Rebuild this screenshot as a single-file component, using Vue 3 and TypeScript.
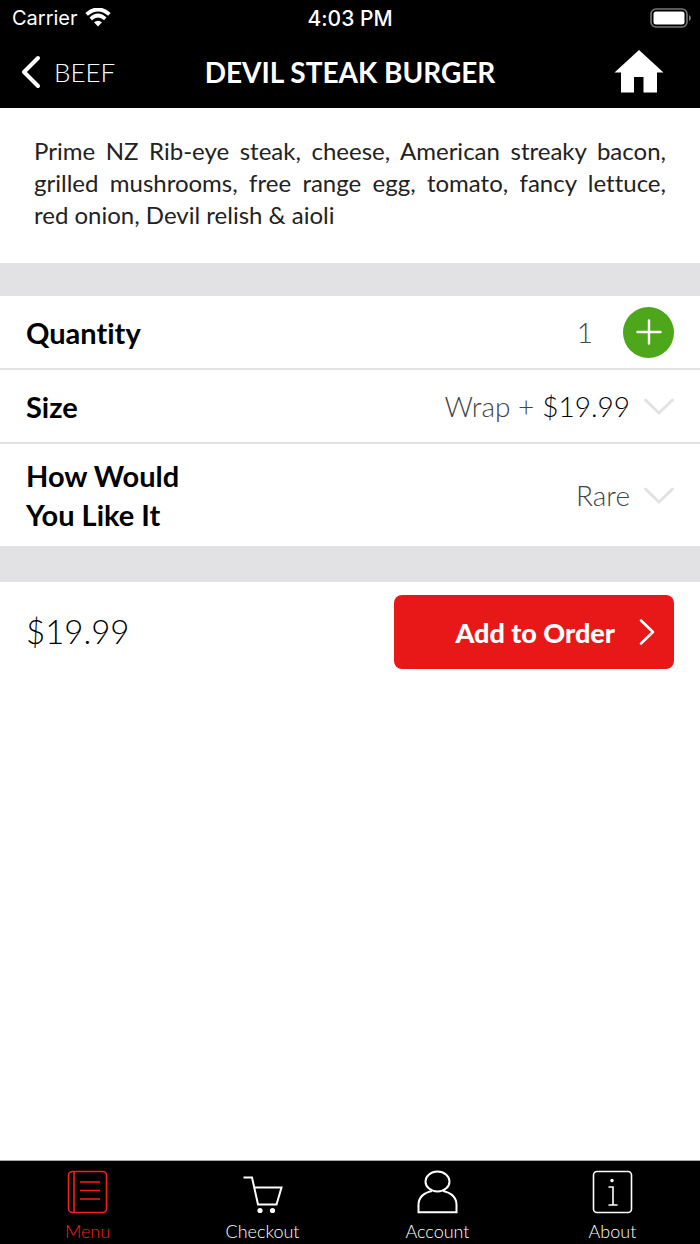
<script setup lang="ts">
import { computed, ref } from 'vue'

interface SizeOption {
  name: string
  price: number
}

const sizes: SizeOption[] = [{ name: 'Wrap', price: 19.99 }]
const donenesses: string[] = ['Rare']
const tabs: string[] = ['Menu', 'Checkout', 'Account', 'About']

const quantity = ref<number>(1)
const sizeName = ref<string>('Wrap')
const doneness = ref<string>('Rare')
const activeTab = ref<string>('Menu')

const unitPrice = computed<number>(() => sizes.find((s) => s.name === sizeName.value)?.price ?? 0)
const money = (value: number): string => `$${value.toFixed(2)}`
</script>

<template>
  <div class="app">
    <div class="status">
      <div class="carrier">
        <span>Carrier</span>
        <svg width="26" height="20" viewBox="0 0 26 20" fill="none" stroke="#fff" aria-hidden="true">
          <path d="M1.6 6.400Q13 -3.600 24.4 6.400" stroke-width="3.800" />
          <path d="M5.700 10.800Q13 4.200 20.300 10.800" stroke-width="3.600" />
          <path d="M9 14.300Q13 11 17 14.300L13 18.400Z" fill="#fff" stroke="none" />
        </svg>
      </div>
      <time class="clock">4:03 PM</time>
      <svg class="battery" width="42" height="20" viewBox="0 0 42 20" aria-hidden="true">
        <rect x="1" y="1" width="36" height="18" rx="5" fill="none" stroke="#777" stroke-width="1.6" />
        <rect x="3.500" y="3.500" width="31" height="13" rx="2.500" fill="#fff" />
        <path d="M39 7q2 1 2 3t-2 3z" fill="#777" />
      </svg>
    </div>

    <header class="nav">
      <a class="back" href="#beef">
        <svg width="20" height="34" viewBox="0 0 20 34" fill="none" stroke="#fff" stroke-width="4" stroke-linecap="round" stroke-linejoin="round" aria-hidden="true">
          <path d="M17 3L3 17L17 31" />
        </svg>
        <span>BEEF</span>
      </a>
      <h1>DEVIL STEAK BURGER</h1>
      <a class="home" href="#home" aria-label="Home">
        <svg width="50" height="44" viewBox="0 0 50 44" fill="#fff" aria-hidden="true">
          <path d="M25 0L49.500 22.500H43V42.500H29.500V27H20V42.500H7V22.500H.5Z" />
        </svg>
      </a>
    </header>

    <main>
      <p class="description">
        Prime NZ Rib-eye steak, cheese, American streaky bacon, grilled mushrooms, free range egg,
        tomato, fancy lettuce, red onion, Devil relish &amp; aioli
      </p>

      <section class="options">
        <div class="row">
          <span id="quantity-label" class="label">Quantity</span>
          <div class="value quantity" aria-labelledby="quantity-label" role="group">
            <output>{{ quantity }}</output>
            <button class="plus" type="button" aria-label="Increase quantity" @click="quantity++">
              <svg width="26" height="26" viewBox="0 0 26 26" stroke="#fff" stroke-width="2.4" stroke-linecap="round" aria-hidden="true">
                <path d="M13 1.500V24.500M1.500 13H24.500" />
              </svg>
            </button>
          </div>
        </div>
        <div class="row">
          <label class="label" for="size">Size</label>
          <div class="value">
            <select id="size" v-model="sizeName">
              <option v-for="s in sizes" :key="s.name" :value="s.name">{{ s.name }} +</option>
            </select>
            <span class="price">{{ money(unitPrice) }}</span>
            <svg class="chevron" width="32" height="20" viewBox="0 0 32 20" aria-hidden="true">
              <path d="M3.500 4L17 17L30.500 4" />
            </svg>
          </div>
        </div>
        <div class="row tall">
          <label class="label" for="doneness">How Would You Like It</label>
          <div class="value">
            <select id="doneness" v-model="doneness">
              <option v-for="d in donenesses" :key="d" :value="d">{{ d }}</option>
            </select>
            <svg class="chevron" width="32" height="20" viewBox="0 0 32 20" aria-hidden="true">
              <path d="M3.500 4L17 17L30.500 4" />
            </svg>
          </div>
        </div>
      </section>

      <section class="summary">
        <span class="total">{{ money(unitPrice * quantity) }}</span>
        <button class="order" type="button">
          <span>Add to Order</span>
          <svg width="16" height="28" viewBox="0 0 16 28" fill="none" stroke="#fff" stroke-width="2.600" stroke-linecap="round" stroke-linejoin="round" aria-hidden="true">
            <path d="M2 2.500L14 14L2 25.500" />
          </svg>
        </button>
      </section>
    </main>

    <nav class="tabs" aria-label="Main">
      <a
        v-for="tab in tabs"
        :key="tab"
        :href="`#${tab.toLowerCase()}`"
        :class="{ active: tab === activeTab }"
        @click="activeTab = tab"
      >
        <svg width="42" height="44" viewBox="0 0 42 44" fill="none" stroke="currentColor" stroke-width="1.6" aria-hidden="true">
          <template v-if="tab === 'Menu'">
            <rect x="1.500" y="1.500" width="38" height="41" rx="4" />
            <path d="M7 1.500V42.500M13 12H33M13 20.500H33M13 29H33" />
          </template>
          <template v-else-if="tab === 'Checkout'">
            <path d="M1.500 7.500H10L16 34.500H34.500L39.500 17.500H12" stroke-width="2" />
            <circle cx="18" cy="40.500" r="2.600" fill="currentColor" stroke="none" />
            <circle cx="30.500" cy="40.500" r="2.600" fill="currentColor" stroke="none" />
          </template>
          <template v-else-if="tab === 'Account'">
            <ellipse cx="20.500" cy="11.500" rx="12" ry="10" stroke-width="2" />
            <path d="M15 21C6 23 1.500 28 1.500 35V42.200H39.500V35C39.500 28 35 23 26 21" stroke-width="2" />
          </template>
          <template v-else>
            <rect x="1.500" y="1.500" width="38" height="41" rx="3.500" />
            <circle cx="20" cy="10.500" r="1.700" fill="currentColor" stroke="none" />
            <path d="M16.500 17H21V35M16.500 35H25.500" />
          </template>
        </svg>
        <span>{{ tab }}</span>
      </a>
    </nav>
  </div>
</template>

<style>
body {
  margin: 0;
  background: #fff;
}
</style>

<style scoped>
.app {
  display: flex;
  flex-direction: column;
  min-height: 100vh;
  font-family: Lato, "Open Sans", sans-serif;
  font-variant-ligatures: none;
  color: #000;
}

.app * {
  box-sizing: border-box;
}

svg {
  display: block;
  flex: none;
}

a {
  color: inherit;
  text-decoration: none;
}

button,
select {
  margin: 0;
  padding: 0;
  border: 0;
  font: inherit;
  cursor: pointer;
}

.status,
.nav {
  display: grid;
  grid-template-columns: 1fr auto 1fr;
  align-items: center;
  background: #000;
  color: #fff;
}

.status {
  height: 36px;
  padding: 0 8px;
  font-family: Inter, sans-serif;
  font-size: 20px;
}

.carrier {
  display: flex;
  align-items: center;
  gap: 7px;
  padding-left: 4px;
}

.clock {
  font-size: 21px;
  font-weight: 500;
}

.battery {
  justify-self: end;
}

.nav {
  height: 72px;
  padding: 0 21px 1px;
}

.back {
  display: flex;
  align-items: center;
  gap: 13px;
  font-size: 26px;
  font-weight: 300;
}

h1 {
  margin: 0;
  font-size: 28px;
  font-weight: 700;
}

.home {
  justify-self: end;
  padding-right: 15px;
}

main {
  flex: 1;
}

.description {
  margin: 0;
  padding: 27px 34px 32px;
  font-size: 24px;
  line-height: 32px;
  text-align: justify;
  color: #222;
}

.options {
  border-top: 33px solid #e2e2e4;
  border-bottom: 36px solid #e2e2e4;
}

.row {
  display: flex;
  align-items: center;
  justify-content: space-between;
  min-height: 74px;
  padding: 0 26px;
  border-bottom: 2px solid #e2e2e4;
}

.tall {
  padding: 12px 26px;
  border-bottom: 0;
}

.label {
  max-width: 200px;
  font-size: 29px;
  font-weight: 700;
  line-height: 39px;
}

.value {
  display: flex;
  align-items: center;
  font-size: 28px;
  font-weight: 300;
  color: #444;
}

.quantity {
  gap: 30px;
}

.plus {
  display: grid;
  place-items: center;
  width: 51px;
  height: 51px;
  border-radius: 50%;
  background: #4ea61a;
}

select {
  appearance: none;
  field-sizing: content;
  background: none;
  color: inherit;
}

.price {
  padding-left: 8px;
  color: #000;
}

.chevron {
  margin-left: 12px;
  fill: none;
  stroke: #e2e2e4;
  stroke-width: 3;
  stroke-linecap: round;
  stroke-linejoin: round;
}

.summary {
  display: flex;
  align-items: center;
  justify-content: space-between;
  padding: 13px 26px;
}

.total {
  padding-bottom: 3px;
  font-size: 33px;
  font-weight: 300;
}

.order {
  display: flex;
  align-items: center;
  justify-content: flex-end;
  gap: 24px;
  width: 280px;
  height: 74px;
  padding-right: 19px;
  border-radius: 8px;
  background: #e81818;
  color: #fff;
  font-size: 27px;
  font-weight: 900;
}

.tabs {
  display: grid;
  grid-template-columns: repeat(4, 1fr);
  height: 84px;
  border-top: 1px solid #aaa;
  background: #000;
  color: #fff;
}

.tabs a {
  display: flex;
  flex-direction: column;
  align-items: center;
  gap: 6px;
  padding-top: 9px;
  font-size: 18px;
  font-weight: 300;
  line-height: 22px;
}

.tabs .active {
  color: #ff1a1a;
}
</style>
